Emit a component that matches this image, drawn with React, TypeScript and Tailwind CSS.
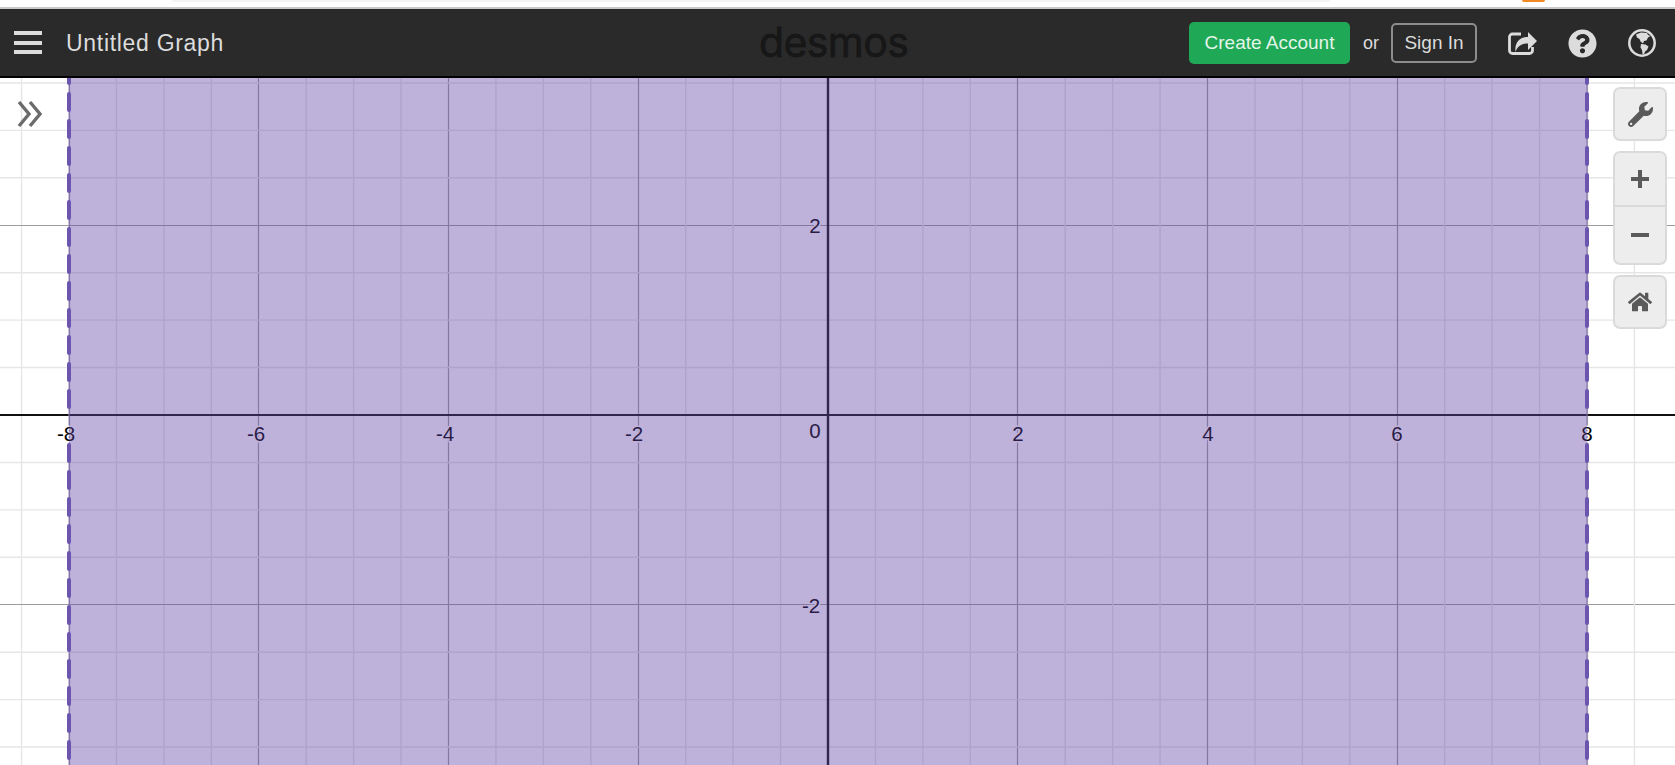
import { FaHome, FaQuestionCircle, FaWrench } from 'react-icons/fa';

const UNIT = 94.875;
const ORIGIN_X = 828;
const ORIGIN_Y = 337;

const steps = Array.from({ length: 41 }, (_, i) => (i - 20) / 2);

const labels = [
  { text: '-8', x: 66, y: 363 },
  { text: '-6', x: 256, y: 363 },
  { text: '-4', x: 445, y: 363 },
  { text: '-2', x: 634, y: 363 },
  { text: '0', x: 815, y: 360 },
  { text: '2', x: 1018, y: 363 },
  { text: '4', x: 1208, y: 363 },
  { text: '6', x: 1397, y: 363 },
  { text: '8', x: 1587, y: 363 },
  { text: '2', x: 815, y: 155 },
  { text: '-2', x: 811, y: 535 },
];

function GraphPaper() {
  return (
    <svg className="absolute inset-0 h-full w-full" viewBox="0 0 1675 687" preserveAspectRatio="none">
      {steps.map((s) => {
        if (s === 0) return null;
        const major = s % 2 === 0;
        const x = ORIGIN_X + s * UNIT;
        const y = ORIGIN_Y + s * UNIT;
        if (major) {
          const mx = Math.floor(x) + 0.5;
          const my = Math.floor(y) + 0.5;
          return (
            <g key={s} stroke="#9c9c9c" strokeWidth={1.2}>
              <line x1={mx} x2={mx} y1={0} y2={687} />
              <line x1={0} x2={1675} y1={my} y2={my} />
            </g>
          );
        }
        return (
          <g key={s} stroke="#e6e6e6" strokeWidth={1.4}>
            <line x1={x} x2={x} y1={0} y2={687} />
            <line x1={0} x2={1675} y1={y} y2={y} />
          </g>
        );
      })}
      <line x1={ORIGIN_X} x2={ORIGIN_X} y1={0} y2={687} stroke="#111" strokeWidth={2.4} />
      <line x1={0} x2={1675} y1={ORIGIN_Y} y2={ORIGIN_Y} stroke="#111" strokeWidth={2} />
      <line x1={69} x2={69} y1={0} y2={687} stroke="#9a90b5" strokeWidth={1} />
      <line x1={1587} x2={1587} y1={0} y2={687} stroke="#9a90b5" strokeWidth={1} />
      {labels.map((l) => (
        <text
          key={l.text + l.x}
          x={l.x}
          y={l.y}
          textAnchor="middle"
          fontFamily="'Liberation Sans', Arial, sans-serif"
          fontSize={20.5}
          fill="#000"
          stroke="#fff"
          strokeWidth={3}
          paintOrder="stroke"
        >
          {l.text}
        </text>
      ))}
      <rect x={69} y={0} width={1518} height={687} fill="#6145a6" fillOpacity={0.41} />
      {[69, 1587].map((x) => (
        <g
          key={x}
          stroke="#6b55ae"
          strokeWidth={4}
          strokeDasharray="16 11"
          strokeLinecap="round"
        >
          {/* the dash behind the axis label is left out */}
          <line x1={x} x2={x} y1={-11} y2={329} />
          <line x1={x} x2={x} y1={367} y2={700} />
        </g>
      ))}
    </svg>
  );
}

function ShareIcon() {
  return (
    <svg className="h-[24px] w-[30px]" viewBox="0 0 30 24" fill="none">
      <path
        d="M13 3H4.5a3 3 0 0 0-3 3v13.5a3 3 0 0 0 3 3h17a3 3 0 0 0 3-3V16"
        stroke="#dcdcdc"
        strokeWidth={2.8}
      />
      <path d="M29 10L20 1v5C11 6 6.500 12 7.500 21 9.500 15 14 12.500 20 12.500V19z" fill="#dcdcdc" />
    </svg>
  );
}

function GlobeIcon() {
  return (
    <svg className="h-[28px] w-[28px]" viewBox="0 0 28 28" fill="#dcdcdc">
      <circle cx="14" cy="14" r="12.700" fill="none" stroke="#dcdcdc" strokeWidth={2.500} />
      <path d="M8 5.500L13 3.500l6 .500 1 2 2.500 1-2.500 1.500-1.500 3-2.500.500-1 2.500-2.500-2-1-2.500-2.500-1.500z" />
      <path d="M13 15l4.500.500 3 2-1.500 3.500-2 1.500-1 3-1.500-.500-.500-4-1.500-2.500z" />
    </svg>
  );
}

export default function App() {
  return (
    <div className="flex h-screen w-full flex-col overflow-hidden bg-white font-['Liberation_Sans',Arial,sans-serif]">
      <div className="relative h-[9px] shrink-0 border-b-2 border-[#c9c9c9] bg-white">
        <div className="absolute top-0 left-[172px] h-[2px] w-[1158px] rounded-b bg-[#f3f3f3]" />
        <div className="absolute top-0 left-[1522px] h-[2px] w-[23px] rounded-b bg-[#f08a24]" />
      </div>

      <header className="flex h-[69px] shrink-0 items-center border-b-2 border-black bg-[#2a2a2a] text-[#dcdcdc]">
        <div className="flex w-[66px] shrink-0 justify-start pl-[14px]">
          <div className="flex h-[23px] w-[28px] flex-col justify-between">
            <span className="h-[4px] bg-[#dcdcdc]" />
            <span className="h-[4px] bg-[#dcdcdc]" />
            <span className="h-[4px] bg-[#dcdcdc]" />
          </div>
        </div>
        <div className="mt-[1px] w-[693px] shrink-0 text-[23px] tracking-[0.7px]">Untitled Graph</div>
        <div className="w-[430px] shrink-0 font-['Inter',sans-serif] text-[41px] leading-none tracking-[-0.6px] text-[#171717] [-webkit-text-stroke:1px_#171717] [text-shadow:0_0_2px_#3a3a3a]">
          desmos
        </div>
        <button className="mt-[1px] flex h-[42px] w-[161px] shrink-0 items-center justify-center rounded-[5px] bg-[#1fa855] text-[19px] text-[#e3f4ea]">
          Create Account
        </button>
        <span className="mt-[1px] ml-[13px] w-[16px] text-[18px]">or</span>
        <button className="mt-[1px] ml-[12px] flex h-[40px] w-[86px] shrink-0 items-center justify-center rounded-[5px] border-2 border-[#8d8d8d] text-[19px]">
          Sign In
        </button>
        <div className="mt-[1px] ml-[31px] flex items-center">
          <ShareIcon />
          <FaQuestionCircle className="ml-[30px] h-[29px] w-[29px]" />
          <div className="ml-[31px]">
            <GlobeIcon />
          </div>
        </div>
      </header>

      <main className="relative flex-1">
        <GraphPaper />

        <svg
          className="absolute top-[22px] left-[17px] h-[28px] w-[26px]"
          viewBox="0 0 26 28"
          fill="none"
          stroke="#6b6b6b"
          strokeWidth={3.4}
        >
          <path d="M2 2l10 12L2 26" />
          <path d="M13 2l10 12-10 12" />
        </svg>

        <div className="absolute top-[9px] right-[8px] flex h-[54px] w-[54px] items-center justify-center rounded-[7px] border-2 border-[#dadada] bg-[#ededed] text-[#5a5a5a]">
          <FaWrench className="h-[25px] w-[25px]" />
        </div>

        <div className="absolute top-[73px] right-[8px] flex w-[54px] flex-col overflow-hidden rounded-[7px] border-2 border-[#dadada] bg-[#ededed]">
          <div className="flex h-[54px] items-center justify-center border-b-2 border-[#dadada]">
            <svg className="h-[18px] w-[18px]" viewBox="0 0 18 18" fill="#5a5a5a">
              <rect x="0" y="7" width="18" height="4" />
              <rect x="7" y="0" width="4" height="18" />
            </svg>
          </div>
          <div className="flex h-[56px] items-center justify-center">
            <svg className="h-[4px] w-[18px]" viewBox="0 0 18 4" fill="#5a5a5a">
              <rect x="0" y="0" width="18" height="4" />
            </svg>
          </div>
        </div>

        <div className="absolute top-[197px] right-[8px] flex h-[54px] w-[54px] items-center justify-center rounded-[7px] border-2 border-[#dadada] bg-[#ededed] text-[#5a5a5a]">
          <FaHome className="h-[24px] w-[24px]" />
        </div>
      </main>
    </div>
  );
}
